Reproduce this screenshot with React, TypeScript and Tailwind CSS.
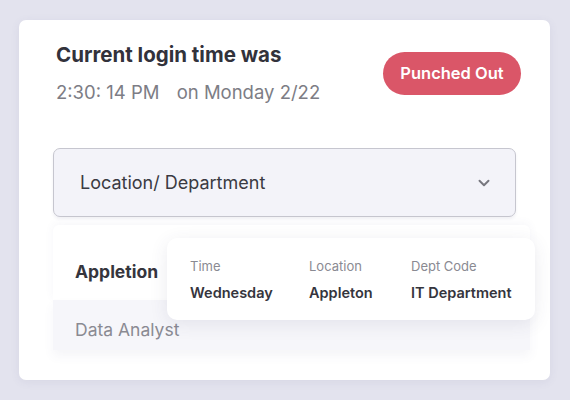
import { ChevronDown } from "lucide-react";

const font = { fontFamily: "Inter, 'Noto Sans', sans-serif" };

function Popover() {
  const cols = [
    { label: "Time", value: "Wednesday", w: "w-[119px]" },
    { label: "Location", value: "Appleton", w: "w-[102px]" },
    { label: "Dept Code", value: "IT Department", w: "" },
  ];
  return (
    <div className="absolute left-[114px] top-[13px] flex h-[82px] w-[368px] rounded-[10px] bg-white pl-[23px] pt-[20px] shadow-[0_4px_18px_rgba(60,60,100,0.10)]">
      {cols.map((c) => (
        <div key={c.label} className={`flex flex-col ${c.w}`}>
          <span className="text-[13px] leading-[16px] text-[#8a8a92]">{c.label}</span>
          <span className="mt-[10px] text-[14.5px] font-semibold leading-[18px] text-[#35353d]">
            {c.value}
          </span>
        </div>
      ))}
    </div>
  );
}

export default function App() {
  return (
    <div
      className="h-[400px] w-[570px] bg-[#e3e3ee] px-[19px] pt-[20px]"
      style={font}
    >
      <div className="h-[360px] w-[531px] overflow-hidden rounded-[7px] bg-white shadow-[0_2px_10px_rgba(80,80,130,0.08)]">
        <div className="flex items-start justify-between pl-[37px] pr-[29px] pt-[23px]">
          <div>
            <h1 className="text-[20.5px] font-bold leading-[24px] text-[#32323b]">
              Current login time was
            </h1>
            <p className="mt-[14px] text-[18.5px] leading-[22px] text-[#7d7d85]">
              2:30: 14 PM <span className="ml-[12px]">on Monday 2/22</span>
            </p>
          </div>
          <div className="mt-[9px] flex h-[43px] w-[138px] items-center justify-center rounded-full bg-[#da5668] text-[16.5px] font-semibold text-white">
            Punched Out
          </div>
        </div>

        <div className="mx-[34px] mt-[45px] flex h-[69px] w-[463px] items-center justify-between rounded-[7px] border border-[#c6c6cf] bg-[#f3f3f9] pl-[26px] pr-[22px] shadow-[0_2px_3px_rgba(80,80,130,0.08)]">
          <span className="text-[18px] text-[#3a3a42]">Location/ Department</span>
          <ChevronDown size={18} strokeWidth={2.6} className="text-[#77777f]" />
        </div>

        <div className="relative ml-[34px] mt-[8px] w-[477px]">
          <div className="flex h-[75px] items-center rounded-t-[6px] bg-white pl-[22px] pt-[20px] shadow-[0_-2px_10px_rgba(80,80,130,0.05)]">
            <span className="text-[17.5px] font-bold text-[#35353d]">Appletion</span>
          </div>
          <div className="flex h-[50px] items-center bg-[#f6f6fa] pl-[22px] pt-[10px] shadow-[0_6px_10px_rgba(80,80,130,0.06)]">
            <span className="text-[17.5px] text-[#8a8a92]">Data Analyst</span>
          </div>
          <Popover />
        </div>
      </div>
    </div>
  );
}
